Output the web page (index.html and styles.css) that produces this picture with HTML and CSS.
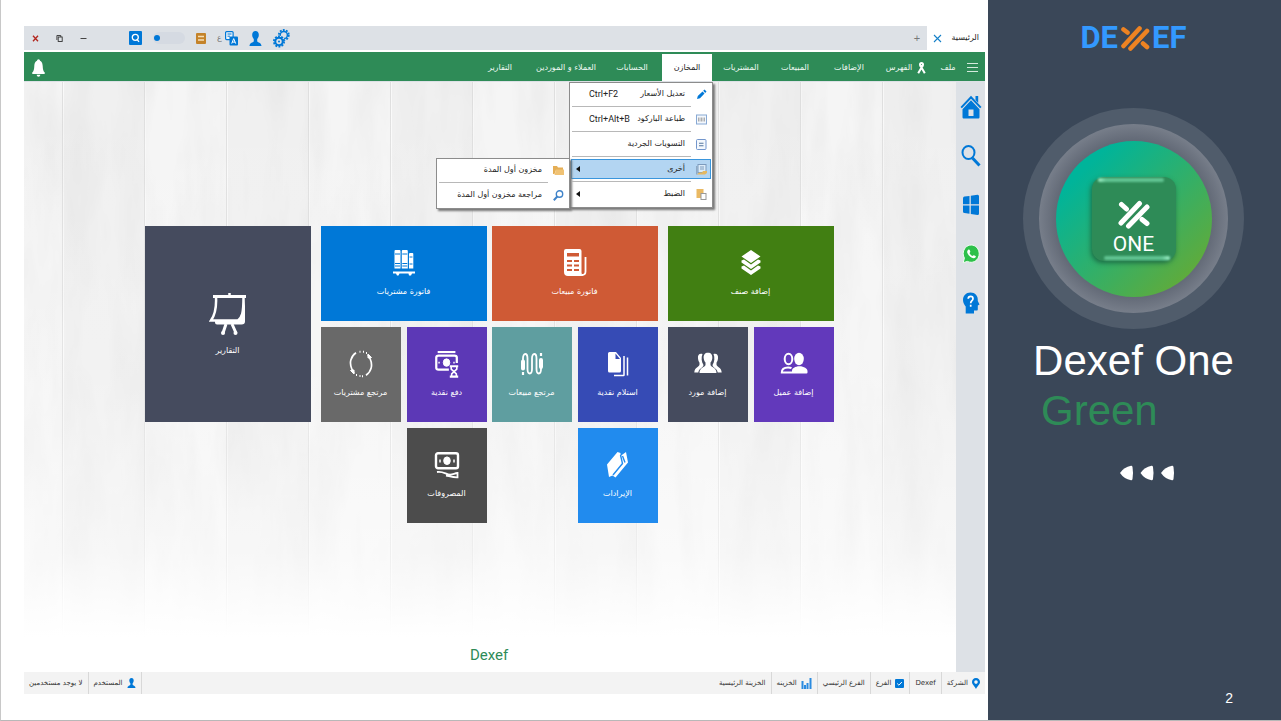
FILE: index.html
```html
<!DOCTYPE html>
<html lang="ar">
<head>
<meta charset="utf-8">
<title>Dexef One</title>
<link rel="stylesheet" href="styles.css">
</head>
<body>
<div class="slide">
  <main class="app" dir="rtl">
    <header class="titlebar">
      <div class="tab"><span>الرئيسية</span>
        <button class="plain" aria-label="إغلاق التبويب"><svg width="9" height="9" viewBox="0 0 9 9"><path d="M1 1l7 7M8 1l-7 7" stroke="#1580c8" stroke-width="1.1"/></svg></button>
      </div>
      <button class="plain new-tab" aria-label="تبويب جديد">+</button>
      <div class="tools">
        <button class="plain" aria-label="الإعدادات"><svg width="17" height="19" viewBox="0 0 17 19" fill="none" stroke="#0078d7"><circle cx="10.800" cy="6" r="3.600" stroke-width="1.500"/><circle cx="10.800" cy="6" r="5" stroke-width="1.800" stroke-dasharray="1.900 1.240"/><circle cx="6" cy="12.500" r="6" fill="#dde1e6" stroke="none"/><circle cx="6" cy="12.500" r="3.700" stroke-width="2"/><circle cx="6" cy="12.500" r="5.100" stroke-width="1.800" stroke-dasharray="1.960 1.240"/><circle cx="6" cy="12.500" r="1" fill="#0078d7" stroke="none"/></svg></button>
        <button class="plain" aria-label="المستخدم"><svg width="13" height="15" viewBox="0 0 13 15"><path d="M6.500 0C4.300 0 3 1.600 3.200 4.200c.1 1.600.7 2.800 1.600 3.700v2.300C4.500 11.500.5 11.500.5 15h12c0-3.500-4-3.500-4.300-4.800V7.900c.9-.9 1.500-2.100 1.600-3.700C10 1.600 8.700 0 6.500 0z" fill="#0078d7"/></svg></button>
        <button class="plain lang" aria-label="اللغة"><svg width="13" height="15" viewBox="0 0 13 15"><rect x=".6" y=".6" width="7.500" height="8" rx="1" fill="#eef5fb" stroke="#0078d7" stroke-width="1.200"/><path d="M2.500 3h4M2.500 5.200h2.500" stroke="#0078d7"/><rect x="4.500" y="5.500" width="8.500" height="9" rx="1" fill="#0078d7"/><path d="M6.700 12.600l2-5 2 5M7.300 11.100h2.800" fill="none" stroke="#fff"/></svg><span>ع</span></button>
        <button class="plain" aria-label="ملاحظات"><svg width="10" height="11" viewBox="0 0 10 11"><rect width="10" height="11" rx="1" fill="#c4832a"/><path d="M2 3.500h6M2 7h6" stroke="#f6dfb6" stroke-width="1.400"/></svg></button>
        <label class="toggle"><input type="checkbox" aria-label="الوضع"></label>
        <button class="plain" aria-label="بحث"><svg width="13" height="14" viewBox="0 0 13 14"><rect width="13" height="14" rx="1" fill="#0078d7"/><circle cx="6.300" cy="6.300" r="3" fill="none" stroke="#fff" stroke-width="1.300"/><path d="M8 8.300l2 2.500" stroke="#fff" stroke-width="1.300"/></svg></button>
      </div>
      <div class="winctl">
        <button class="plain" aria-label="تصغير"><svg width="7" height="7" viewBox="0 0 7 7"><path d="M.5 3.500h6" stroke="#444"/></svg></button>
        <button class="plain" aria-label="استعادة"><svg width="7" height="7" viewBox="0 0 7 7" fill="none" stroke="#333" stroke-width=".9"><rect x="2.200" y="2" width="4" height="4.500"/><path d="M.9 5V.5H4.800V2"/></svg></button>
        <button class="plain" aria-label="إغلاق"><svg width="7" height="7" viewBox="0 0 7 7"><path d="M1 .7l5 5.600M6 .7L1 6.300" stroke="#b3261e" stroke-width="1.300"/></svg></button>
      </div>
    </header>

    <nav class="menubar">
      <button class="plain nav-item" aria-label="القائمة"><svg width="11" height="10" viewBox="0 0 11 10"><path d="M0 .5h11M0 4.500h11M0 8.500h11" stroke="#d5eadd" stroke-width="1"/></svg></button>
      <button class="plain nav-item">ملف</button>
      <button class="plain nav-item"><svg width="9" height="12" viewBox="0 0 9 12" fill="none" stroke="#fff" stroke-width="2"><circle cx="4.500" cy="2.500" r="1.500"/><path d="M3.300 3.500L7.800 11.200M5.700 3.500L1.200 11.200"/></svg>الفهرس</button>
      <button class="plain nav-item">الإضافات</button>
      <button class="plain nav-item">المبيعات</button>
      <button class="plain nav-item">المشتريات</button>
      <div class="nav-open">
        <button class="plain nav-item current" aria-expanded="true">المخازن</button>
        <ul class="menu">
          <li><button class="plain row"><svg width="11" height="11" viewBox="0 0 11 11"><path d="M1 10l.8-3L6.500 2.500l2 2L4 9.200zM7.200 1.800L8.500.6l2 2L9.200 3.900z" fill="#0078d7"/></svg><span>تعديل الأسعار</span><kbd>Ctrl+F2</kbd></button></li>
          <li><button class="plain row"><svg width="11" height="11" viewBox="0 0 11 11"><rect x=".5" y="1" width="10" height="9" fill="#f4f8fd" stroke="#88a9d4"/><path d="M2.500 3.500v4M4 3.500v4M5.500 3.500v4M7 3.500v4M8.500 3.500v4" stroke="#999" stroke-width=".8"/></svg><span>طباعة الباركود</span><kbd>Ctrl+Alt+B</kbd></button></li>
          <li><button class="plain row"><svg width="11" height="11" viewBox="0 0 11 11"><rect x=".5" y=".5" width="9.500" height="10" rx="1" fill="#f4f8fd" stroke="#7396cc"/><path d="M3 4.200h4.500M3 6.800h4.500" stroke="#55779f" stroke-width="1.100"/></svg><span>التسويات الجردية</span></button></li>
          <li><button class="plain row selected"><svg width="11" height="11" viewBox="0 0 11 11"><rect x="2" y=".5" width="8" height="8" fill="#dcecf9" stroke="#7d9bbd"/><path d="M4 3h4M4 5h4" stroke="#7d9bbd"/><path d="M0 2v8.500h1.500V2z" fill="#8fa9c4"/><path d="M1 10.500l2-2h3l1-1.500h4v2l-2 1.500z" fill="#e5b860"/></svg><span>أخرى</span><i class="caret"></i></button>
            <ul class="menu submenu">
              <li><button class="plain row"><svg width="11" height="11" viewBox="0 0 11 11"><path d="M0 1h4l1 1.500h5V5H3L1.500 9 0 9z" fill="#e5ae55"/><path d="M3 4.500h8V10H1.500z" fill="#f0c274"/></svg><span>مخزون أول المدة</span></button></li>
              <li><button class="plain row"><svg width="11" height="11" viewBox="0 0 11 11" fill="none" stroke="#3f83c9"><circle cx="6.500" cy="4" r="3.200" stroke-width="1.400"/><path d="M4.300 6.500L.8 10.200" stroke-width="2"/></svg><span>مراجعة مخزون أول المدة</span></button></li>
            </ul>
          </li>
          <li><button class="plain row"><svg width="11" height="11" viewBox="0 0 11 11"><rect x=".5" y="0" width="7" height="9" fill="#eab963"/><rect x="5" y="4.500" width="5" height="6" fill="#fff" stroke="#999"/></svg><span>الضبط</span><i class="caret"></i></button></li>
        </ul>
      </div>
      <button class="plain nav-item">الحسابات</button>
      <button class="plain nav-item">العملاء و الموردين</button>
      <button class="plain nav-item">التقارير</button>
      <button class="plain bell" aria-label="الإشعارات"><svg width="13" height="18" viewBox="0 0 13 18" fill="#fff"><circle cx="6.500" cy="1.800" r="1.500"/><path d="M6.500 1.500C3.400 1.500 2.400 4 2.300 7 2.200 10.500 1.700 12 .3 13.600c-.5.8 0 1.400.9 1.400h10.600c.9 0 1.400-.6.900-1.400C11.300 12 10.800 10.500 10.700 7c-.1-3-1.100-5.500-4.200-5.500z"/><path d="M4.700 15.800h3.600c0 2.500-3.600 2.500-3.600 0z"/></svg></button>
    </nav>

    <div class="body">
      <aside class="rail">
        <button class="plain" aria-label="الرئيسية"><svg width="22" height="24" viewBox="0 0 22 24"><path d="M1.200 12.600L11 2.200l9.800 10.400" fill="none" stroke="#0078d7" stroke-width="2"/><path d="M15.500 1h2.700v7l-2.700-3z" fill="#0078d7"/><path d="M11 5.300l8.500 9V22c0 1-.5 1.500-1.500 1.500H4c-1 0-1.500-.5-1.500-1.500v-7.700zM8.500 14.500V21h5v-6.500z" fill="#0078d7" fill-rule="evenodd"/></svg></button>
        <button class="plain" aria-label="بحث"><svg width="20" height="22" viewBox="0 0 20 22" fill="none" stroke="#0078d7"><ellipse cx="7.500" cy="7.500" rx="6" ry="6.500" stroke-width="2"/><path d="M11.500 13l7 7.500" stroke-width="3"/></svg></button>
        <button class="plain" aria-label="النوافذ"><svg width="18" height="22" viewBox="0 0 18 22" fill="#0078d7"><path d="M1 4.500Q1 2.800 2.500 2.600L7.500 2v8.200H1zM8.800 1.800L15.500.8q1.500-.1 1.500 1.500v7.900H8.800zM1 11.500h6.500v8.200l-5-.6Q1 19 1 17.500zM8.800 11.500H17v7.900q0 1.600-1.500 1.500l-6.700-1z"/></svg></button>
        <button class="plain" aria-label="واتساب"><svg width="18" height="20" viewBox="0 0 18 20"><path d="M9.200 1C4.700 1 1.200 5 1.200 9.700c0 1.700.4 3 1.200 4.400L1.200 18.700l4.200-1.300c1.200.6 2.400.9 3.800.9 4.500 0 8-3.900 8-8.600S13.700 1 9.200 1z" fill="#2dc04a" stroke="#f2fff4"/><path d="M6.200 5.800c.7-.6 1.200-.4 1.500.3l.6 1.500c.1.600-.5 1-.8 1.500.7 1.400 1.600 2.300 3 3 .5-.5.900-1.200 1.500-.9l1.500.8c.6.3.4 1-.1 1.500-1 1-2.300.9-4-.1-2-1.100-3.300-2.600-4-4.300-.5-1.500-.2-2.500.8-3.300z" fill="#fff"/></svg></button>
        <button class="plain" aria-label="مساعدة"><svg width="18" height="22" viewBox="0 0 18 22"><path d="M8.500.5C4 .5 1 3.700 1 8c0 3 1.500 4.700 2.700 6.500V21.500H12v-3h2.500c1 0 1.300-.5 1.300-1.500v-3.500l1.700-1L15.800 9C16.200 3.500 13 .5 8.500.5z" fill="#0078d7"/><path d="M6.200 6.800C6.300 3.600 11 3.700 11 6.700c0 2-2.300 2-2.300 4.500M8.700 12.800v2" fill="none" stroke="#fff" stroke-width="1.700"/></svg></button>
      </aside>

      <section class="desk">
        <svg class="wood" aria-hidden="true" width="100%" height="100%">
          <defs>
            <filter id="grain" x="0" y="0" width="100%" height="100%"><feTurbulence type="fractalNoise" baseFrequency="0.03 0.006" numOctaves="4" seed="8"/><feColorMatrix values="0 0 0 0 .6  0 0 0 0 .6  0 0 0 0 .6  .45 0 0 0 -.16"/></filter>
            <pattern id="planks" x="38" width="164" height="600" patternUnits="userSpaceOnUse"><rect width="82" height="600" fill="#f0f0f0"/><rect x="82" width="82" height="600" fill="#f5f5f5"/><path d="M.5 0v600M82.500 0v600" stroke="#e0e0e0"/><path d="M1.500 0v600M83.500 0v600" stroke="#fafafa"/></pattern>
            <linearGradient id="fade" x2="0" y2="1"><stop offset="0" stop-color="#fff" stop-opacity="0"/><stop offset=".5" stop-color="#fff" stop-opacity=".15"/><stop offset=".8" stop-color="#fff" stop-opacity=".5"/><stop offset=".94" stop-color="#fff"/></linearGradient>
          </defs>
          <rect width="100%" height="100%" fill="url(#planks)"/>
          <rect width="100%" height="100%" filter="url(#grain)"/>
          <rect width="100%" height="100%" fill="url(#fade)"/>
        </svg>
        <div class="tiles">
          <div class="group">
            <button class="tile wide green"><svg width="20" height="26" viewBox="0 0 20 26" fill="#fff"><path d="M10 0l9.500 6.500L10 13 .5 6.500zM.5 10.500L3 9.500l7 5 7-5 2.500 1v2L10 19 .5 12.500zM.5 16.500l2.500-1 7 5 7-5 2.500 1v2L10 25 .5 18.500z"/></svg><span>إضافة صنف</span></button>
            <button class="tile purple"><svg width="28" height="26" viewBox="0 0 28 26" fill="#fff"><ellipse cx="19" cy="8" rx="4.800" ry="6.200"/><ellipse cx="8.500" cy="8" rx="3.800" ry="5.200" fill="none" stroke="#fff" stroke-width="2"/><path d="M12 22.500v-3c0-2 3-4.300 7.500-4.300s8 2.500 8 4.800v1.500q0 1-1 1z"/><path d="M12 21.500H1.800C1.800 18 4 16.400 8 16.400c1.500 0 2.500.2 3.500.8" fill="none" stroke="#fff" stroke-width="2"/></svg><span>إضافة عميل</span></button>
            <button class="tile slate"><svg width="28" height="24" viewBox="0 0 28 24" fill="#fff"><path d="M8.500 2C5.500 1 3.500 3 4 6.500c.2 2 .8 3 1.500 4.200v1.800c0 2.500-5 2.500-5.200 8h4c.7-4.500 5-4.500 5.200-7.500C7.500 10 7 5.500 8.500 2zM19.500 2c3-1 5 1 4.500 4.500-.2 2-.8 3-1.500 4.200v1.800c0 2.500 5 2.500 5.200 8h-4c-.7-4.500-5-4.500-5.200-7.500C20.500 10 21 5.500 19.500 2z"/><path d="M14 .8c-3 0-4.700 2-4.300 5.500.2 2 .9 3.200 1.800 4.200v2.500c-.5 2.500-6 2.200-6 8h17c0-5.800-5.500-5.500-6-8v-2.500c.9-1 1.600-2.200 1.800-4.200C18.700 2.800 17 .8 14 .8z"/></svg><span>إضافة مورد</span></button>
          </div>
          <div class="pair">
            <div class="group">
              <button class="tile wide orange"><svg width="24" height="28" viewBox="0 0 24 28"><path d="M3 0h13.500q2 0 2 2v21.500q0 3 2 3.500H5q-4 0-4-4V2Q1 0 3 0zM4 4v3.500h12V4zM4 11v2h5v-2zM11 11v2h5v-2zM4 15.500v2h5v-2zM11 15.500v2h5v-2zM4 20v2h5v-2zM11 20v2h5v-2z" fill="#fff" fill-rule="evenodd"/><path d="M19 26q3.500 0 3.500-3.500V8" fill="none" stroke="#fff" stroke-width="1.800"/></svg><span>فاتورة مبيعات</span></button>
              <button class="tile indigo"><svg width="22" height="26" viewBox="0 0 22 26"><path d="M2.500 1H9l5 6v13q0 1.500-1.500 1.500h-10Q1 21.500 1 20V2.500Q1 1 2.500 1zM8.500 2.500V8h4.500z" fill="#fff" fill-rule="evenodd"/><path d="M17 5v19q0 .5-.5.500H7M20.500 6.500v18" fill="none" stroke="#fff" stroke-width="1.500"/></svg><span>استلام نقدية</span></button>
              <button class="tile teal"><svg width="24" height="24" viewBox="0 0 24 24" fill="none" stroke="#fff" stroke-width="1.800"><path d="M3 17V6.500C3 .5 7.500.5 7.500 6.500V17c0 6 4.500 6 4.500 0V6.500c0-6 4.500-6 4.500 0V17c0 6 4.500 6 4.500 0V7"/><path d="M3 9.500v7M21 8v7" stroke-width="4" stroke-linecap="round"/><path d="M21 1v3M3 20v3" stroke-width="2.200"/></svg><span>مرتجع مبيعات</span></button>
              <button class="tile sky"><svg width="24" height="28" viewBox="0 0 24 28"><path d="M11.500 1l3 1v3L20 1l2 10.500L9.500 26.500l-3-2L3 26 1 13.500z" fill="#fff"/><path d="M14.500 4l2 8.500L7 24M16.500 5l2.500 6.500" fill="none" stroke="#218bee" stroke-width="1.400"/></svg><span>الإيرادات</span></button>
            </div>
            <div class="group">
              <button class="tile wide blue"><svg width="22" height="28" viewBox="0 0 22 28"><path d="M2.500 1h4q1 0 1 1v17.500h-6V2q0-1 1-1zM9.800 1h4q1 0 1 1v17.500h-6V2q0-1 1-1zM17 4h2.500q.8 0 .8 1v14.500H16V5q0-1 1-1zM0 22.500h22v2h-3l-1 2h-2l-.5-2H6.500l-1 2H4l-1-2H0z" fill="#fff"/><path d="M2 5h5M9.300 5h5M2 14.500h5M9.300 14.500h5M2 17h5M9.300 17h5M16.500 8h3M16.500 15h3" stroke="#0078d7"/></svg><span>فاتورة مشتريات</span></button>
              <button class="tile violet"><svg width="26" height="30" viewBox="0 0 26 30" fill="none" stroke="#fff"><path d="M3 2.200h19" stroke-width="2.200"/><path d="M15 21H4Q1.500 21 1.500 19V8Q1.500 6 4 6h17q2.500 0 2.500 2v6" stroke-width="2.400"/><path d="M4.500 12.500v2M20.500 12.500v2" stroke-width="1.500"/><ellipse cx="12.500" cy="13.500" rx="3.500" ry="4" fill="#fff"/><path d="M16 17.500h9M16 28.500h9" stroke-width="2.200"/><path d="M17.500 18v2.500l5.500 5v3M23.500 18v2.500l-5.500 5v3" stroke-width="1.700"/></svg><span>دفع نقدية</span></button>
              <button class="tile gray"><svg width="24" height="28" viewBox="0 0 24 28" fill="none" stroke="#fff" stroke-width="1.700"><path d="M7 2.800C1.500 6.500 0 13 3 19.500l2 4M17 25.200c5.500-3.700 7-10.200 4-16.700l-2-4"/><path d="M10.500 1.700h1M14 1.700h1M17 3h1M10.500 26h1M14 26.200h-1M7 25h1" stroke-width="2"/><path d="M1.500 20.500L5 20v4zM22.500 7.500L19 8V4z" fill="#fff" stroke-width="1"/></svg><span>مرتجع مشتريات</span></button>
              <button class="tile dark"><svg width="26" height="28" viewBox="0 0 26 28" fill="none" stroke="#fff"><rect x="2" y="2.200" width="22" height="15" rx="2" stroke-width="2.400"/><path d="M6 8.500v3M20 8.500v3" stroke-width="1.500"/><ellipse cx="13" cy="9.700" rx="3.300" ry="3.800" fill="#fff"/><path d="M3 21c5-1 8 1.500 12 2.500 3 .5 5-1 8.500-1.500v4.300C19 26.500 15 25 12 24.500" stroke-width="1.800"/></svg><span>المصروفات</span></button>
            </div>
          </div>
          <button class="tile slate tall"><svg width="38" height="44" viewBox="0 0 38 44" fill="none" stroke="#fff"><path d="M4 4.500h33" stroke-width="3"/><path d="M20.500 1v4" stroke-width="2.500"/><path d="M7 5c.5 9-.5 17-5 23.500h27c4-3 5.500-7 5.500-23.500" stroke-width="2.500"/><path d="M6 28v2.500q0 2 2 2h24.500q3.500 0 3.500-3V5c-1 13-3 19-6 23.500z" fill="#fff" stroke="none"/><path d="M17 32l-3 9M23 32l4 9" stroke-width="3"/><circle cx="14" cy="41" r="2" fill="#fff" stroke="none"/><circle cx="26.500" cy="41" r="2" fill="#fff" stroke="none"/></svg><span>التقارير</span></button>
        </div>
        <p class="brand">Dexef</p>
      </section>
    </div>

    <footer class="status">
      <span class="cell"><svg width="8" height="11" viewBox="0 0 8 11"><path d="M4 0C1.500 0 0 1.700 0 4c0 2.500 2.700 4 4 7 1.300-3 4-4.500 4-7 0-2.300-1.500-4-4-4zm0 2.300a1.800 1.800 0 110 3.600 1.800 1.800 0 010-3.600z" fill="#0078d7" fill-rule="evenodd"/></svg>الشركة</span>
      <span class="cell">Dexef</span>
      <span class="cell"><svg width="9" height="9" viewBox="0 0 9 9"><rect width="9" height="9" rx="1" fill="#0078d7"/><path d="M2.200 4.500l1.700 1.700 3-3.200" fill="none" stroke="#fff"/></svg>الفرع</span>
      <span class="cell">الفرع الرئيسي</span>
      <span class="cell"><svg width="11" height="11" viewBox="0 0 11 11"><path d="M1.500 3v8M4 7v4M6.500 5v6M9.500 0v11" stroke="#2b8be0" stroke-width="2"/></svg>الخزينه</span>
      <span class="cell last">الخزينة الرئيسية</span>
      <span class="cell user"><svg width="9" height="10" viewBox="0 0 13 15"><path d="M6.500 0C4.300 0 3 1.600 3.200 4.200c.1 1.600.7 2.800 1.600 3.700v2.300C4.500 11.500.5 11.500.5 15h12c0-3.500-4-3.500-4.300-4.800V7.900c.9-.9 1.500-2.100 1.600-3.700C10 1.600 8.700 0 6.500 0z" fill="#0078d7"/></svg>المستخدم</span>
      <span class="cell last">لا يوجد مستخدمين</span>
    </footer>
  </main>

  <aside class="promo">
    <div class="logo"><span>DE</span><svg width="30" height="26" viewBox="0 0 30 26" stroke="#ee8322" stroke-width="4.600" stroke-linecap="round"><path d="M3.500 21L19.500 3.500M10.500 23.500L27 6M3.500 4.500l4 3M23 18.500l4 3.500"/></svg><span>EF</span></div>
    <div class="halo"><div class="ring"><div class="disc"><div class="badge">
      <svg width="34" height="30" viewBox="0 0 34 30" stroke="#fff" stroke-width="5" stroke-linecap="round"><path d="M4 24L22.500 4.500M11.500 27L30 8M4.500 5.500l5 4.500M25 20.500l5 4"/></svg>
      <span>ONE</span>
    </div></div></div></div>
    <h1>Dexef One</h1>
    <h2>Green</h2>
    <svg class="arrows" width="56" height="16" viewBox="0 0 56 16" fill="#fff"><path id="a" d="M1 8Q5 2 12 .8q1.200-.2 1.500 1.200 1 6 0 12-.3 1.400-1.500 1.200Q5 14 1 8z"/><use href="#a" x="20.500"/><use href="#a" x="41"/></svg>
    <p class="page">2</p>
  </aside>
</div>
</body>
</html>
```
FILE: styles.css
```css
* { box-sizing: border-box; }
body { margin: 0; background: #fff; font-family: "DejaVu Sans", sans-serif; color: #333; }
ul { list-style: none; margin: 0; padding: 0; }
svg { flex: none; display: block; }
.plain { border: 0; background: none; padding: 0; margin: 0; font: inherit; color: inherit; display: flex; align-items: center; justify-content: center; }

.slide { display: flex; min-height: 100vh; border-left: 1px solid #c8c8c8; border-bottom: 1px solid #b8b8b8; }
.app { flex: 1; display: flex; flex-direction: column; margin: 26px 3px 26px 23px; font-size: 8px; line-height: 12px; white-space: nowrap; }

.titlebar { display: flex; align-items: center; height: 24px; background: #dde1e6; color: #777; }
.tab { display: flex; align-items: center; justify-content: space-between; align-self: stretch; width: 58px; padding: 0 6px; background: #fff; color: #222; }
.new-tab { width: 20px; font: 11px "Liberation Sans", sans-serif; }
.tools { display: flex; align-items: center; gap: 11px; margin-inline-start: auto; padding-inline-end: 42px; }
.lang { gap: 3px; }
.toggle { display: flex; }
.toggle input { appearance: none; display: flex; align-items: center; width: 32px; height: 12px; margin: 0; padding: 0 1px; border-radius: 6px; background: #d5dae2; direction: ltr; }
.toggle input::before { content: ""; width: 6px; height: 6px; border-radius: 50%; background: #0078d7; }
.winctl { display: flex; gap: 17px; padding-inline-end: 8px; }

.menubar { display: grid; grid-template-columns: 25px 24px 60px 54px 54px 54px 54px 56px 76px 56px 1fr; height: 30px; margin-top: 2px; border-bottom: 1px solid #dde1e6; background: #2e8b57; color: #f0faf4; }
.nav-item { gap: 5px; padding-top: 3px; }
.nav-open { position: relative; display: flex; padding: 2px 2px 0; z-index: 2; }
.current { flex: 1; padding-top: 1px; background: #fff; color: #222; }
.bell { justify-self: end; padding: 2px 8px 0; }

.menu { position: absolute; top: calc(100% + 1px); right: 1px; width: 144px; padding: 0 1px; border: 1px solid #8c8c8c; background: #fff; color: #222; box-shadow: 2px 2px 2px #777; }
.menu li { position: relative; height: 25px; padding: 2px 0; }
.menu li:first-child { height: 24px; padding-top: 1px; }
.menu li:not(:last-child)::after { content: ""; position: absolute; left: 1px; right: 20px; bottom: 0; height: 1px; background: #b8b8b8; }
.row { width: 100%; height: 20px; padding: 0 3px; justify-content: flex-start; border: 1px solid transparent; }
.row svg { margin-inline-end: 11px; }
.row kbd { width: 44px; margin-right: auto; margin-left: 14px; font: 9px/12px "Roboto", sans-serif; direction: ltr; text-align: left; }
.selected { border: 1px solid #3a96dd; background: #b3d5f2; }
.caret { margin-right: auto; margin-left: 1px; border: 3px solid transparent; border-right: 4px solid #111; border-left: 0; }
.menu .submenu { top: 1px; right: calc(100% + 1px); width: 134px; }

.body { flex: 1; display: flex; }
.rail { display: flex; flex-direction: column; align-items: center; width: 29px; padding-top: 13px; gap: 25px; background: #dde1e6; }
.rail button { height: 24px; }
.desk { position: relative; flex: 1; display: flex; flex-direction: column; align-items: center; padding: 144px 2px 0 0; }
.wood { position: absolute; inset: 0; }
.tiles, .brand { position: relative; }
.tiles { display: flex; align-items: flex-start; gap: 10px; }
.pair { display: flex; gap: 5px; }
.group { display: grid; grid-template-columns: 80px 80px; grid-auto-rows: 95px; gap: 6px; }
.tile { display: flex; flex-direction: column; align-items: center; justify-content: center; gap: 9px; padding: 0; border: 0; color: #fff; font: inherit; }
.tile svg { height: 28px; }
.wide { grid-column: span 2; }
.tall { width: 166px; height: 196px; }
.tall svg { height: 44px; }
.green { background: #417f12; }
.purple { background: #6239bb; }
.slate { background: #454b5e; }
.orange { background: #cf5a35; }
.indigo { background: #364bb5; }
.teal { background: #5f9ea0; }
.sky { background: #218bee; }
.blue { background: #0078d7; }
.violet { background: #5c38b6; }
.gray { background: #696969; }
.dark { background: #4c4c4c; }
.brand { margin: auto 0 8px; font: 15px/18px "Roboto", sans-serif; color: #2e8b57; }

.status { display: flex; align-items: stretch; height: 22px; background: #f3f3f3; font-size: 7px; }
.cell { display: flex; align-items: center; gap: 4px; padding: 0 5px; border-left: 1px solid #d8d8d8; }
.cell.last { border-left: 0; }
.user { margin-inline-start: auto; border-right: 1px solid #d8d8d8; }

.promo { display: flex; flex-direction: column; align-items: center; width: 293px; padding: 23px 45px 14px 43px; background: #3a4758; color: #fff; font-family: "Liberation Sans", sans-serif; }
.logo { display: flex; align-items: center; gap: 2px; height: 30px; font: 700 31px/30px "Roboto", sans-serif; color: #3399ff; }
.halo, .ring, .disc { display: grid; place-items: center; border-radius: 50%; }
.halo { width: 221px; height: 221px; margin-top: 55px; background: #505c6b; }
.ring { width: 189px; height: 189px; background: radial-gradient(closest-side, #626976 82%, #777e8a); }
.disc { width: 156px; height: 156px; background: linear-gradient(135deg, #00b49a 18%, #5fab3c 86%); }
.badge { position: relative; display: flex; flex-direction: column; align-items: center; justify-content: flex-end; gap: 4px; width: 84px; height: 84px; padding-bottom: 6px; border-radius: 12px; background: #2e8b57; box-shadow: -1px 2px 5px #1c6b45; }
.badge::before, .badge::after { content: ""; position: absolute; height: 4px; border-radius: 4px; filter: blur(1px); background: linear-gradient(90deg, #a5f5cd, #62c593 12%, #62c593); }
.badge::before { top: 1px; left: 6px; right: 12px; }
.badge::after { bottom: 1px; left: 12px; right: 6px; background: linear-gradient(270deg, #a5f5cd, #62c593 12%, #62c593); }
.badge span { font: 400 21px/22px "Roboto", sans-serif; }
h1, h2 { margin: 0; font-weight: 400; font-size: 42px; line-height: 50px; white-space: nowrap; }
h1 { margin-top: 7px; }
h2 { align-self: flex-start; margin-left: 10px; color: #2e8b57; }
.arrows { margin: 29px 0 0 27px; }
.page { align-self: flex-end; margin: auto 3px 0 0; font-size: 14px; line-height: 16px; }
```
